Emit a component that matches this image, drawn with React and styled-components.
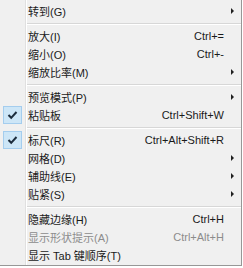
import styled, { createGlobalStyle } from "styled-components";

const GlobalStyle = createGlobalStyle`
    html, body {
        margin: 0;
        padding: 0;
        background: #ffffff;
    }
`;

const Menu = styled.div`
    width: 241px;
    padding: 2px 0 1px;
    border-right: 1px solid #979797;
    border-bottom: 1px solid #979797;
    background:
        linear-gradient(to right, transparent 25px, #e0e0e0 25px, #e0e0e0 26px, #ffffff 26px, #ffffff 27px, transparent 27px),
        #f0f0f0;
    font-family: "Liberation Sans", "Noto Sans CJK SC", sans-serif;
    font-size: 11px;
    color: #1a1a1a;
`;

const Row = styled.div`
    display: grid;
    grid-template-columns: 28px 1fr auto 17px;
    align-items: center;
    height: 18px;
    color: ${props => (props.disabled ? "#8c8c8c" : "#1a1a1a")};
`;

const Gutter = styled.div`
    display: flex;
    align-items: center;
    height: 18px;
`;

const CheckBox = styled.div`
    box-sizing: border-box;
    width: 19px;
    height: 18px;
    margin-left: 3px;
    display: flex;
    align-items: center;
    justify-content: center;
    background: #cde6f7;
    border: 1px solid #a4cdee;
`;

const Label = styled.span`
    white-space: nowrap;
`;

const Shortcut = styled.span`
    white-space: nowrap;
    text-align: right;
`;

const Arrow = styled.span`
    display: flex;
    justify-content: center;

    &::after {
        content: "";
        border-left: 3px solid #202020;
        border-top: 3px solid transparent;
        border-bottom: 3px solid transparent;
    }
`;

const Separator = styled.div`
    height: 7px;
    display: flex;
    align-items: center;
    padding-left: 27px;

    &::after {
        content: "";
        flex: 1;
        height: 1px;
        border-top: 1px solid #d7d7d7;
        background: #ffffff;
    }
`;

const Check = () => (
    <svg width="11" height="10" viewBox="0 0 11 10">
        <path d="M1.5 5 L4.2 7.8 L9.5 2" fill="none" stroke="#1c2c3c" strokeWidth="2" />
    </svg>
);

const items = [
    { label: "转到(G)", sub: true },
    "sep",
    { label: "放大(I)", key: "Ctrl+=" },
    { label: "缩小(O)", key: "Ctrl+-" },
    { label: "缩放比率(M)", sub: true },
    "sep",
    { label: "预览模式(P)", sub: true },
    { label: "粘贴板", key: "Ctrl+Shift+W", checked: true },
    "sep",
    { label: "标尺(R)", key: "Ctrl+Alt+Shift+R", checked: true },
    { label: "网格(D)", sub: true },
    { label: "辅助线(E)", sub: true },
    { label: "贴紧(S)", sub: true },
    "sep",
    { label: "隐藏边缘(H)", key: "Ctrl+H" },
    { label: "显示形状提示(A)", key: "Ctrl+Alt+H", disabled: true },
    { label: "显示 Tab 键顺序(T)" },
];

function App() {
    return (
        <>
            <GlobalStyle />
            <Menu>
                {items.map((item, i) =>
                    item === "sep" ? (
                        <Separator key={i} />
                    ) : (
                        <Row key={i} disabled={item.disabled}>
                            <Gutter>
                                {item.checked && (
                                    <CheckBox>
                                        <Check />
                                    </CheckBox>
                                )}
                            </Gutter>
                            <Label>{item.label}</Label>
                            <Shortcut>{item.key}</Shortcut>
                            {item.sub ? <Arrow /> : <span />}
                        </Row>
                    )
                )}
            </Menu>
        </>
    );
}

export default App;
